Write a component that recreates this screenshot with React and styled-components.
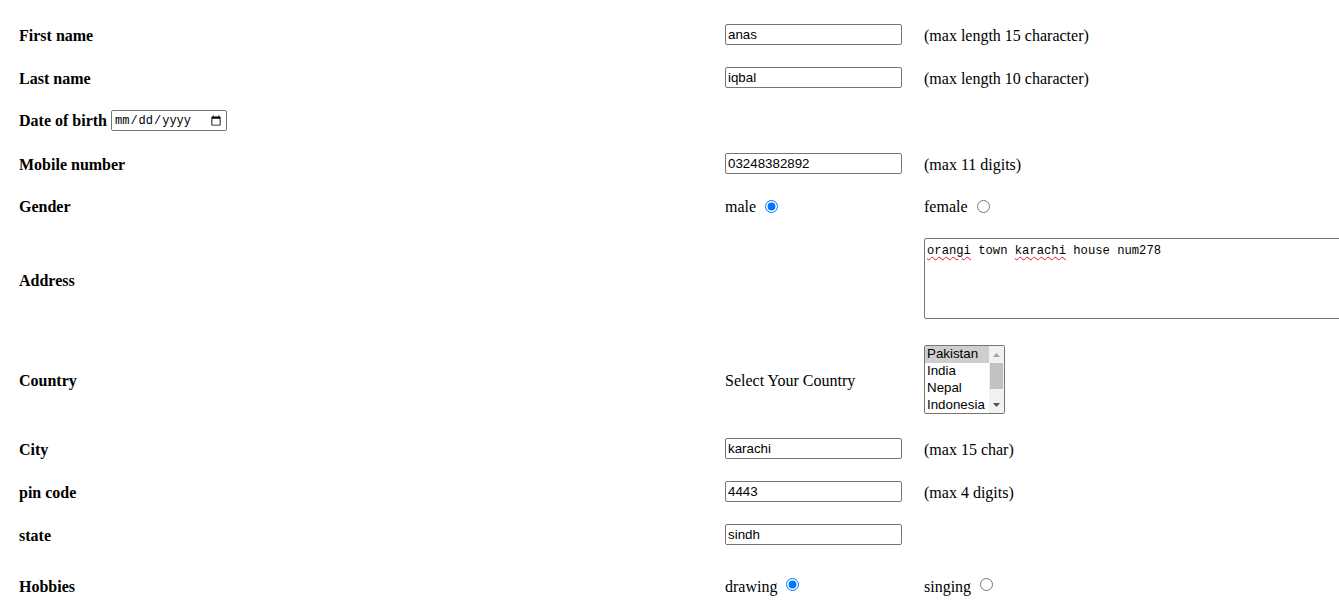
import React from "react";
import styled, { createGlobalStyle } from "styled-components";

const Global = createGlobalStyle`
  html, body { margin: 0; padding: 0; background: #fff; overflow: hidden; }
  body { font-family: "Liberation Serif", "Times New Roman", serif; font-size: 16px; color: #000; }
`;

const Page = styled.form`
  padding: 13px 0 0 19px;
  width: 1600px;
`;

const Row = styled.div`
  display: grid;
  grid-template-columns: 706px 199px auto;
  height: ${(p) => p.$h || 43}px;
  align-items: center;
`;

const Label = styled.div`
  font-weight: bold;
  display: flex;
  align-items: center;
  white-space: nowrap;
  padding-top: ${(p) => p.$nudge || 0}px;
`;

const Cell = styled.div`
  display: flex;
  align-items: center;
  white-space: nowrap;
  padding-top: ${(p) => p.$nudge || 0}px;
`;

const Note = styled.div`
  white-space: nowrap;
  padding-top: 2px;
`;

const TextInput = styled.input`
  box-sizing: border-box;
  width: 177px;
  height: 21px;
  margin: 0;
  padding: 1px 2px;
  border: 1px solid #767676;
  border-radius: 2px;
  font-family: "Liberation Sans", Arial, sans-serif;
  font-size: 13.33px;
  color: #000;
  background: #fff;
  outline: none;
`;

const DateInput = styled.input`
  box-sizing: border-box;
  width: 116px;
  height: 21px;
  margin: 0 0 0 4px;
  padding: 1px 2px;
  border: 1px solid #767676;
  border-radius: 2px;
  font-family: "Liberation Mono", "DejaVu Sans Mono", monospace;
  font-size: 12px;
  color: #000;
  background: #fff;
`;

const Radio = styled.input`
  width: 13px;
  height: 13px;
  margin: 0 3px ${(p) => p.$lift || 1}px 9px;
  accent-color: #0075ff;
`;

const AreaWrap = styled.div`
  position: relative;
  margin-bottom: 5px;
`;

const TextArea = styled.textarea`
  display: block;
  box-sizing: border-box;
  width: 470px;
  height: 81px;
  margin: 0;
  padding: 5px 2px 2px;
  border: 1px solid #767676;
  border-radius: 2px;
  font-family: "Liberation Mono", "DejaVu Sans Mono", monospace;
  font-size: 12.2px;
  line-height: 15px;
  color: #000;
  resize: none;
  outline: none;
`;

const SpellLayer = styled.div`
  position: absolute;
  left: 3px;
  top: 6px;
  font-family: "Liberation Mono", "DejaVu Sans Mono", monospace;
  font-size: 12.2px;
  line-height: 15px;
  color: transparent;
  white-space: pre;
  pointer-events: none;
`;

const Misspelled = styled.span`
  text-decoration: underline wavy #e81123;
  text-decoration-thickness: 1px;
  text-underline-offset: 2px;
`;

const ListWrap = styled.div`
  position: relative;
  width: 81px;
  height: 69px;
  margin-bottom: 2px;
`;

const ListBox = styled.select`
  display: block;
  box-sizing: border-box;
  width: 81px;
  height: 69px;
  margin: 0;
  padding: 0;
  border: 1px solid #767676;
  border-radius: 2px;
  font-family: "Liberation Sans", Arial, sans-serif;
  font-size: 13.33px;
  color: #000;
  background: #fff;
  outline: none;
  overflow: hidden;
  option {
    padding: 0 2px 1px;
    min-height: 16px;
  }
  option:checked {
    background: #cecece linear-gradient(#cecece, #cecece);
    color: #000;
  }
`;

const ScrollRail = styled.div`
  position: absolute;
  top: 1px;
  right: 1px;
  bottom: 1px;
  width: 15px;
  background: #f1f1f1;
  display: flex;
  flex-direction: column;
  pointer-events: none;
`;

const ScrollBtn = styled.div`
  height: 17px;
  display: flex;
  align-items: center;
  justify-content: center;
  flex: none;
`;

const ScrollTrack = styled.div`
  flex: 1;
  display: flex;
  flex-direction: column;
  padding: 0 1px;
`;

const ScrollThumb = styled.div`
  height: 26px;
  background: #c1c1c1;
`;

const countries = ["Pakistan", "India", "Nepal", "Indonesia", "China"];

export default function App() {
  return (
    <>
      <Global />
      <Page onSubmit={(e) => e.preventDefault()}>
        <Row>
          <Label $nudge={2}>First name</Label>
          <Cell><TextInput type="text" defaultValue="anas" maxLength={15} /></Cell>
          <Note>(max length 15 character)</Note>
        </Row>
        <Row>
          <Label $nudge={2}>Last name</Label>
          <Cell><TextInput type="text" defaultValue="iqbal" maxLength={10} /></Cell>
          <Note>(max length 10 character)</Note>
        </Row>
        <Row>
          <Label>Date of birth <DateInput type="date" /></Label>
          <Cell />
          <Note />
        </Row>
        <Row>
          <Label $nudge={2}>Mobile number</Label>
          <Cell><TextInput type="text" defaultValue="03248382892" maxLength={11} /></Cell>
          <Note>(max 11 digits)</Note>
        </Row>
        <Row>
          <Label $nudge={1}>Gender</Label>
          <Cell $nudge={1}>male <Radio type="radio" name="gender" defaultChecked $lift={2} /></Cell>
          <Cell $nudge={1}>female <Radio type="radio" name="gender" $lift={2} /></Cell>
        </Row>
        <Row $h={106}>
          <Label>Address</Label>
          <Cell />
          <AreaWrap>
            <TextArea defaultValue="orangi town karachi house num278" spellCheck={false} />
            <SpellLayer>
              <Misspelled>orangi</Misspelled> town <Misspelled>karachi</Misspelled> house num278
            </SpellLayer>
          </AreaWrap>
        </Row>
        <Row $h={93}>
          <Label>Country</Label>
          <Cell>Select Your Country</Cell>
          <Cell>
            <ListWrap>
              <ListBox size={4} defaultValue="Pakistan">
                {countries.map((c) => (
                  <option key={c} value={c}>{c}</option>
                ))}
              </ListBox>
              <ScrollRail>
                <ScrollBtn>
                  <svg width="7" height="4" viewBox="0 0 7 4"><polygon points="3.5,0 7,4 0,4" fill="#a3a3a3" /></svg>
                </ScrollBtn>
                <ScrollTrack>
                  <ScrollThumb />
                </ScrollTrack>
                <ScrollBtn>
                  <svg width="7" height="4" viewBox="0 0 7 4"><polygon points="0,0 7,0 3.5,4" fill="#505050" /></svg>
                </ScrollBtn>
              </ScrollRail>
            </ListWrap>
          </Cell>
        </Row>
        <Row>
          <Label $nudge={2}>City</Label>
          <Cell><TextInput type="text" defaultValue="karachi" maxLength={15} /></Cell>
          <Note>(max 15 char)</Note>
        </Row>
        <Row>
          <Label $nudge={2}>pin code</Label>
          <Cell><TextInput type="text" defaultValue="4443" maxLength={4} /></Cell>
          <Note>(max 4 digits)</Note>
        </Row>
        <Row>
          <Label $nudge={2}>state</Label>
          <Cell><TextInput type="text" defaultValue="sindh" /></Cell>
          <Note />
        </Row>
        <Row $h={58}>
          <Label $nudge={3}>Hobbies</Label>
          <Cell $nudge={3}>drawing <Radio type="radio" name="hobby" defaultChecked $lift={5} /></Cell>
          <Cell $nudge={3}>singing <Radio type="radio" name="hobby" $lift={5} /></Cell>
        </Row>
      </Page>
    </>
  );
}
